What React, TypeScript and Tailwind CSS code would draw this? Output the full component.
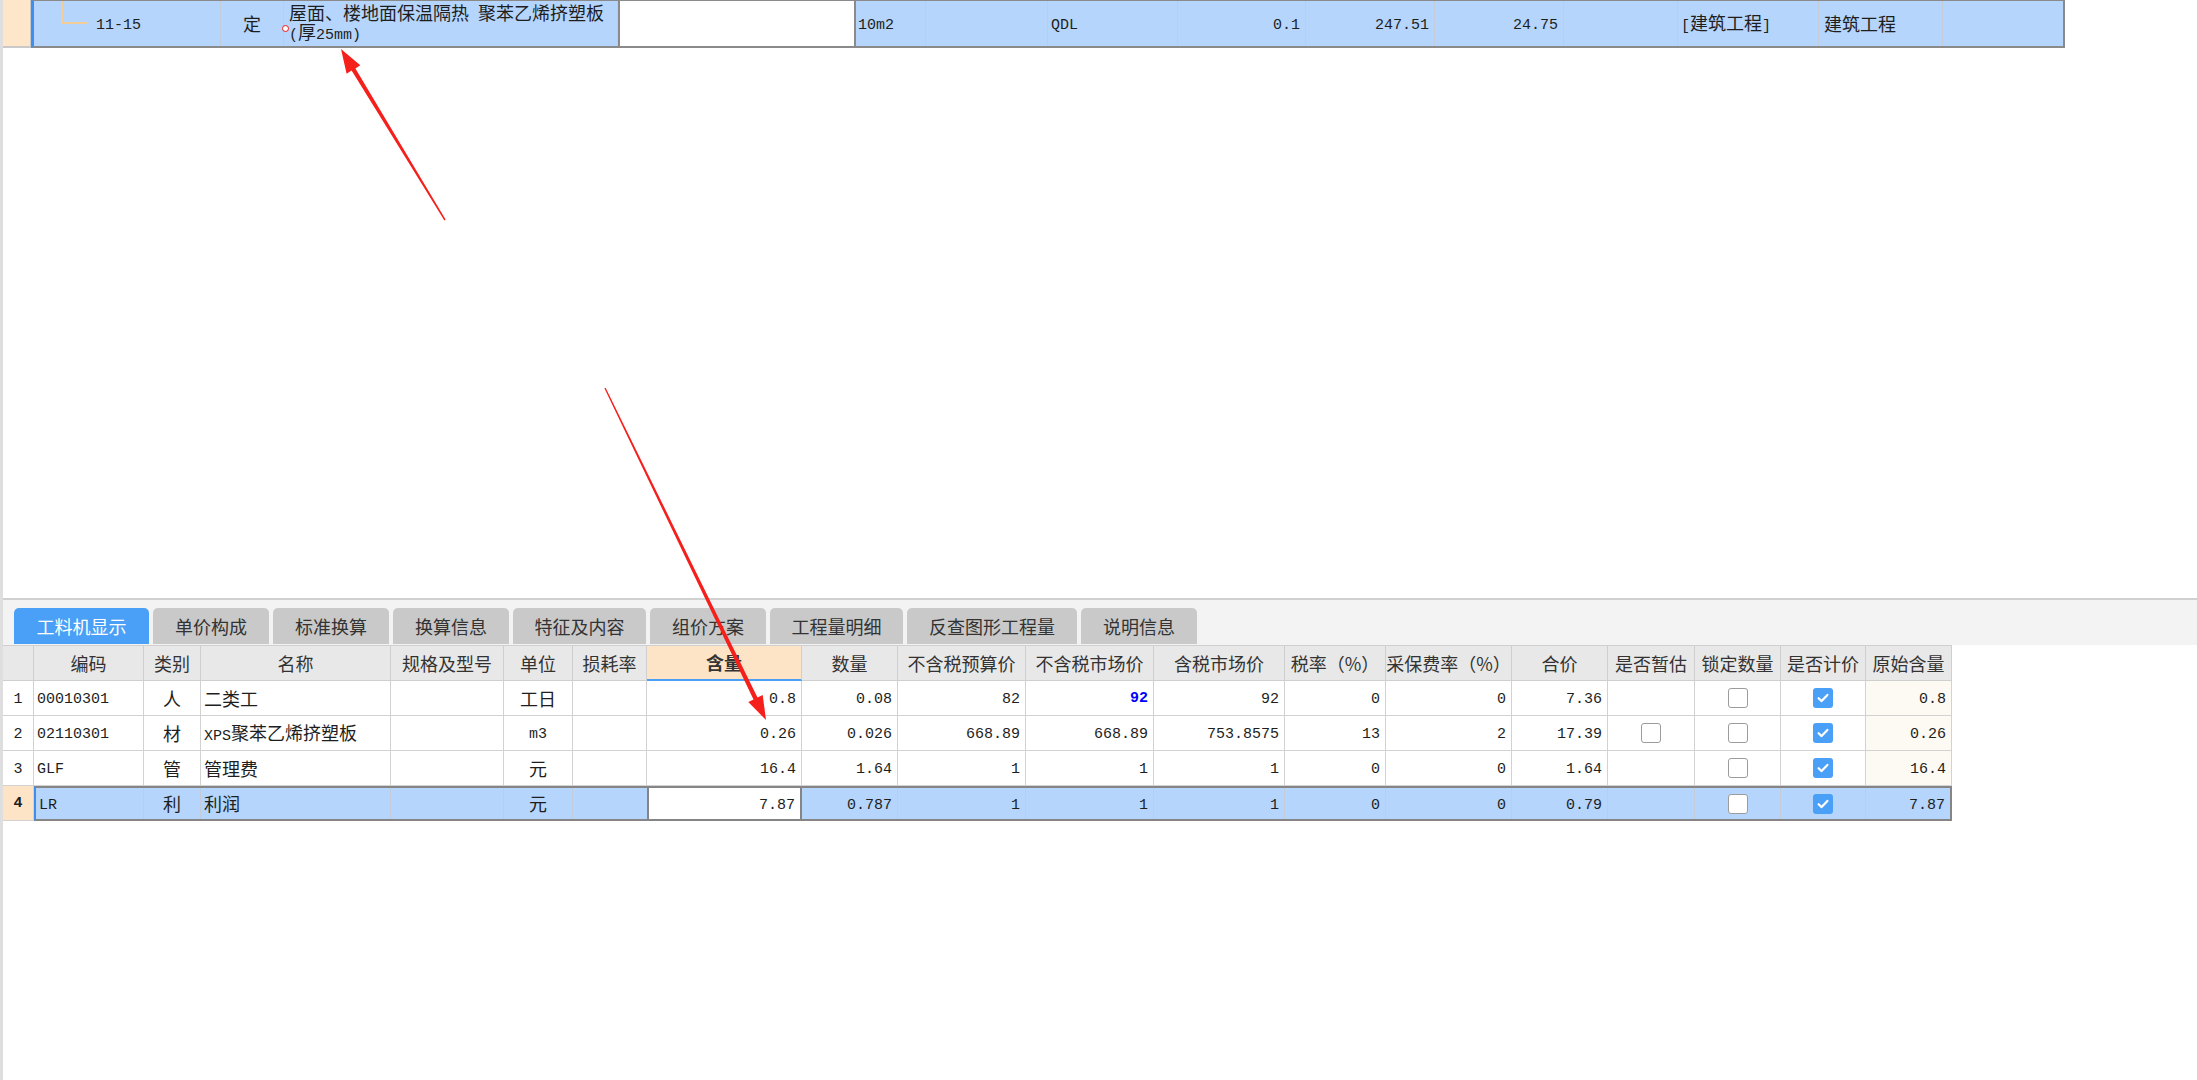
import React from "react";

const MONO = "font-['Liberation_Mono','Noto_Sans_CJK_SC',monospace] text-[15px]";
const CJK = "font-['Noto_Sans_CJK_SC',sans-serif] text-[18px]";

function T({ s }: { s: string }) {
  const parts = s.split(/([\x20-\x7e]+)/).filter((p) => p.length > 0);
  return (
    <span className="leading-none whitespace-pre">
      {parts.map((p, i) =>
        /^[\x20-\x7e]+$/.test(p) ? (
          <span key={i} className={`${MONO} leading-none`}>
            {p}
          </span>
        ) : (
          <span key={i} className={`${CJK} leading-none`}>
            {p}
          </span>
        )
      )}
    </span>
  );
}

function CB({ checked }: { checked: boolean }) {
  if (checked) {
    return (
      <div className="w-[20px] h-[20px] rounded-[3px] bg-[#4a9ff6] flex items-center justify-center">
        <svg width="14" height="14" viewBox="0 0 14 14">
          <path d="M2.6 7.2 L5.6 10.1 L11.4 3.9" fill="none" stroke="#ffffff" strokeWidth="2.2" strokeLinecap="round" strokeLinejoin="round" />
        </svg>
      </div>
    );
  }
  return <div className="w-[20px] h-[20px] rounded-[3px] border-[1.5px] border-[#9c9c9c] bg-white" />;
}

function Arrow({ x1, y1, x2, y2 }: { x1: number; y1: number; x2: number; y2: number }) {
  const dx = x2 - x1;
  const dy = y2 - y1;
  const L = Math.hypot(dx, dy);
  const ux = dx / L;
  const uy = dy / L;
  const px = -uy;
  const py = ux;
  const hl = 24;
  const hw = 8;
  const bx = x2 - ux * hl;
  const by = y2 - uy * hl;
  const t0 = 0.7;
  const t1 = 2.2;
  const pts = [
    [x1 + px * t0, y1 + py * t0],
    [bx + px * t1, by + py * t1],
    [bx + px * hw, by + py * hw],
    [x2, y2],
    [bx - px * hw, by - py * hw],
    [bx - px * t1, by - py * t1],
    [x1 - px * t0, y1 - py * t0],
  ]
    .map((p) => `${p[0].toFixed(1)},${p[1].toFixed(1)}`)
    .join(" ");
  return <polygon points={pts} fill="#f5201c" />;
}

const cols = [31, 110, 57, 190, 113, 69, 74, 155, 96, 128, 128, 131, 101, 126, 96, 87, 86, 85, 86];
const headers = [
  "",
  "编码",
  "类别",
  "名称",
  "规格及型号",
  "单位",
  "损耗率",
  "含量",
  "数量",
  "不含税预算价",
  "不含税市场价",
  "含税市场价",
  "税率（%）",
  "采保费率（%）",
  "合价",
  "是否暂估",
  "锁定数量",
  "是否计价",
  "原始含量",
];
const aligns = [
  "justify-center",
  "justify-start pl-[3px]",
  "justify-center",
  "justify-start pl-[3px]",
  "justify-start pl-[3px]",
  "justify-center",
  "justify-end pr-[5px]",
  "justify-end pr-[5px]",
  "justify-end pr-[5px]",
  "justify-end pr-[5px]",
  "justify-end pr-[5px]",
  "justify-end pr-[5px]",
  "justify-end pr-[5px]",
  "justify-end pr-[5px]",
  "justify-end pr-[5px]",
  "justify-center",
  "justify-center",
  "justify-center",
  "justify-end pr-[5px]",
];

type V = string | boolean | null;
const rows: V[][] = [
  ["1", "00010301", "人", "二类工", "", "工日", "", "0.8", "0.08", "82", "92*", "92", "0", "0", "7.36", null, false, true, "0.8"],
  ["2", "02110301", "材", "XPS聚苯乙烯挤塑板", "", "m3", "", "0.26", "0.026", "668.89", "668.89", "753.8575", "13", "2", "17.39", false, false, true, "0.26"],
  ["3", "GLF", "管", "管理费", "", "元", "", "16.4", "1.64", "1", "1", "1", "0", "0", "1.64", null, false, true, "16.4"],
  ["4", "LR", "利", "利润", "", "元", "", "7.87", "0.787", "1", "1", "1", "0", "0", "0.79", null, false, true, "7.87"],
];

function content(v: V) {
  if (typeof v === "boolean") return <CB checked={v} />;
  if (v === null || v === "") return null;
  if (v.endsWith("*"))
    return <span className={`${MONO} font-bold text-[#0000ff] leading-none`}>{v.slice(0, -1)}</span>;
  return <T s={v} />;
}

const tabs = [
  { t: "工料机显示", w: "w-[135px]", active: true },
  { t: "单价构成", w: "w-[116px]" },
  { t: "标准换算", w: "w-[116px]" },
  { t: "换算信息", w: "w-[116px]" },
  { t: "特征及内容", w: "w-[133px]" },
  { t: "组价方案", w: "w-[116px]" },
  { t: "工程量明细", w: "w-[133px]" },
  { t: "反查图形工程量", w: "w-[170px]" },
  { t: "说明信息", w: "w-[116px]" },
];

const topCells: { w: number; node?: React.ReactNode; cls?: string }[] = [
  { w: 70, node: <T s="10m2" />, cls: "justify-start pl-[2px]" },
  { w: 122 },
  { w: 130, node: <T s="QDL" />, cls: "justify-start pl-[3px]" },
  { w: 128, node: <T s="0.1" />, cls: "justify-end pr-[5px]" },
  { w: 129, node: <T s="247.51" />, cls: "justify-end pr-[5px]" },
  { w: 129, node: <T s="24.75" />, cls: "justify-end pr-[5px]" },
  { w: 114 },
  { w: 141, node: <T s="[建筑工程]" />, cls: "justify-start pl-[3px]" },
  { w: 124, node: <T s="建筑工程" />, cls: "justify-start pl-[5px]" },
];

export default function App() {
  return (
    <div className="relative w-[2197px] h-[1080px] bg-white overflow-hidden border-l-[3px] border-[#dedede] text-[#1e1e1e]">
      {/* top grid area */}
      <div className="h-[598px]">
        <div className="flex h-[48px]">
          <div className="w-[28px] shrink-0 bg-[#fee6ca] border-r border-b-2 border-[#c9c9c9]" />
          <div className="flex bg-[#b5d5fc] border-t border-b-2 border-[#8a8a8a] border-l-[3px] border-l-[#3d8ef0]">
            <div className="relative w-[187px] shrink-0 border-r border-[#c3ccd8] flex items-center pl-[62px]">
              <svg className="absolute left-[26px] top-0" width="30" height="26" viewBox="0 0 30 26">
                <path d="M2 0 V22 H27" fill="none" stroke="#f3cd98" strokeWidth="2" />
              </svg>
              <T s="11-15" />
            </div>
            <div className="w-[63px] shrink-0 border-r border-[#c3ccd8] flex items-center justify-center">
              <T s="定" />
            </div>
            <div className="relative w-[334px] shrink-0 border-r border-[#c3ccd8] flex flex-col justify-start pt-[3px] pl-[5px]">
              <span className="absolute left-[-2px] top-[24px] w-[7px] h-[7px] rounded-full border-[1.5px] border-[#f01818] bg-white" />
              <div className="h-[19px] flex items-center">
                <T s="屋面、楼地面保温隔热 聚苯乙烯挤塑板" />
              </div>
              <div className="h-[19px] flex items-center">
                <T s="(厚25mm)" />
              </div>
            </div>
            <div className="w-[238px] shrink-0 bg-white border-x-2 border-[#8a8a8a]" />
            {topCells.map((c, i) => (
              <div
                key={i}
                style={{ width: c.w }}
                className={`shrink-0 border-r border-[#c3ccd8] flex items-center ${c.cls ?? ""}`}
              >
                {c.node}
              </div>
            ))}
            <div className="w-[122px] shrink-0 border-r-2 border-[#8a8a8a]" />
          </div>
        </div>
      </div>

      {/* separator */}
      <div className="h-[2px] bg-[#d0d0d0]" />

      {/* tab strip */}
      <div className="h-[45px] bg-[#f3f3f3] flex items-start pt-[8px] pl-[11px] gap-[4px]">
        {tabs.map((t) => (
          <div
            key={t.t}
            className={`${t.w} h-[36px] rounded-t-[5px] flex items-center justify-center font-['Noto_Sans_CJK_SC',sans-serif] text-[18px] ${
              t.active ? "bg-[#4a9ff6] text-white" : "bg-[#c9c9c9] text-[#333333]"
            }`}
          >
            {t.t}
          </div>
        ))}
      </div>

      {/* bottom table */}
      <div className="flex flex-col">
        <div className="flex">
          {headers.map((h, i) => (
            <div
              key={i}
              style={{ width: cols[i] }}
              className={`shrink-0 h-[36px] border-t border-r border-b border-[#cfcfcf] flex items-center justify-center font-['Noto_Sans_CJK_SC',sans-serif] text-[18px] text-[#333333] ${
                i === 7 ? "bg-[#fde4c6] font-bold text-[#1a1a1a] border-b-2 border-b-[#4a9ff6]" : "bg-[#e8e8e8]"
              }`}
            >
              {h}
            </div>
          ))}
        </div>
        {rows.map((r, ri) => {
          const sel = ri === 3;
          if (!sel) {
            return (
              <div key={ri} className="flex">
                {r.map((v, ci) => (
                  <div
                    key={ci}
                    style={{ width: cols[ci] }}
                    className={`shrink-0 h-[35px] border-r border-b border-[#d2d2d2] flex items-center ${aligns[ci]} ${
                      ci === 18 ? "bg-[#fdf9f3]" : "bg-white"
                    }`}
                  >
                    {content(v)}
                  </div>
                ))}
              </div>
            );
          }
          return (
            <div key={ri} className="flex">
              <div
                style={{ width: cols[0] }}
                className="shrink-0 h-[35px] border-r border-b border-[#d2d2d2] bg-[#fde4c6] flex items-center justify-center"
              >
                <span className={`${MONO} font-bold leading-none`}>{r[0] as string}</span>
              </div>
              <div className="flex h-[35px] bg-[#b5d5fc] border-y-2 border-[#858585] border-l-2 border-l-[#3d8ef0] border-r-2 border-r-[#858585]">
                {r.slice(1).map((v, k) => {
                  const ci = k + 1;
                  let w = cols[ci];
                  if (ci === 1 || ci === 18) w -= 2;
                  const isEdit = ci === 7;
                  return (
                    <div
                      key={ci}
                      style={{ width: w }}
                      className={`shrink-0 h-full flex items-center ${aligns[ci]} ${
                        isEdit
                          ? "bg-white border-x-2 border-[#858585]"
                          : ci === 6 || ci === 18
                          ? ""
                          : "border-r border-[#c3ccd8]"
                      }`}
                    >
                      {content(v)}
                    </div>
                  );
                })}
              </div>
            </div>
          );
        })}
      </div>

      {/* annotation arrows */}
      <svg className="absolute left-[-3px] top-0 pointer-events-none" width="2197" height="1080">
        <Arrow x1={445} y1={220} x2={341} y2={49} />
        <Arrow x1={605} y1={388} x2={766} y2={720} />
      </svg>
    </div>
  );
}
